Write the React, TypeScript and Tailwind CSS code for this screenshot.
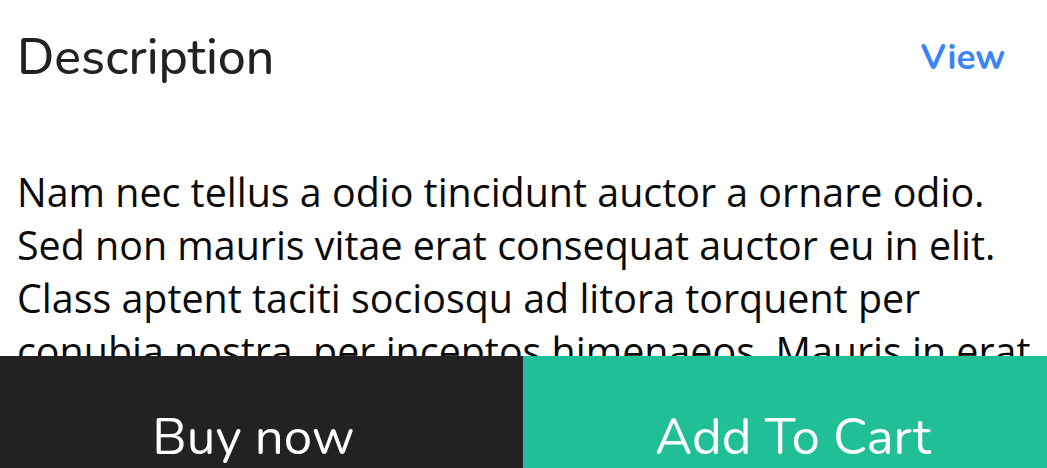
import React from 'react';

export default function App() {
  return (
    <div className="min-h-screen bg-white">
      {/* Header */}
      <div className="flex items-center justify-between pl-[17px] pr-[42px] pt-[28px]">
        <h2 className="text-[50px] leading-[60px] font-medium text-[#222222] font-['Nunito','Lato',sans-serif]">
          Description
        </h2>
        <button className="text-[35px] font-bold text-[#3a84f7] font-['Nunito','Lato',sans-serif]">
          View
        </button>
      </div>

      {/* Body */}
      <p className="mt-[78px] pl-[17px] pr-[14px] text-[39.4px] leading-[53px] text-[#0a0a0a] font-['Open_Sans',sans-serif]">
        Nam nec tellus a odio tincidunt auctor a ornare odio. Sed non mauris vitae erat consequat auctor eu in elit.
        Class aptent taciti sociosqu ad litora torquent per conubia nostra, per inceptos himenaeos. Mauris in erat
        justo. Nullam ac urna eu felis dapibus condimentum sit amet a augue. Sed non neque elit.
      </p>

      {/* Bottom actions */}
      <div className="fixed inset-x-0 top-[356px] flex h-[162px] font-['Nunito','Lato',sans-serif]">
        <button className="flex w-[523px] items-center justify-center bg-[#222222] pr-[16px] text-[51px] text-white">
          Buy now
        </button>
        <button className="flex flex-1 items-center justify-center bg-[#20bf98] pl-[16px] text-[51px] text-white">
          Add To Cart
        </button>
      </div>
    </div>
  );
}
